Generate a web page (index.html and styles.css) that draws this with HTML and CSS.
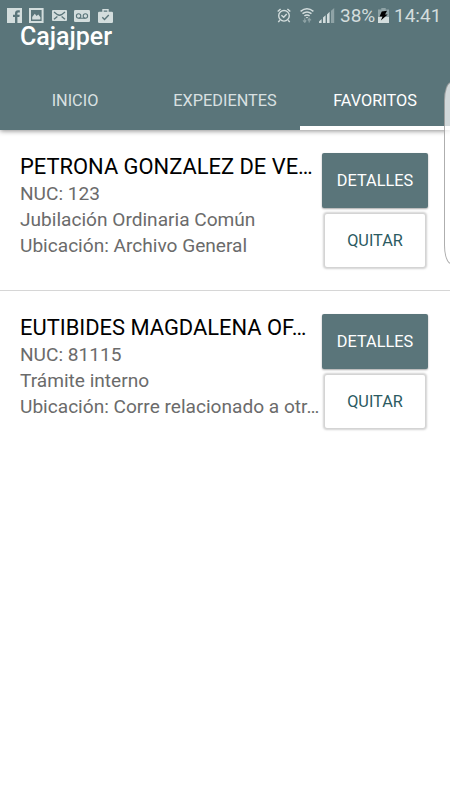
FILE: index.html
```html
<!DOCTYPE html>
<html lang="es">
<head>
    <meta charset="UTF-8">
    <meta name="viewport" content="width=device-width, initial-scale=1.0">
    <title>Cajajper</title>
    <link rel="stylesheet" href="styles.css">
</head>
<body>
    <header class="header">
        <div class="status-bar">
            <div class="status-left">
                <svg width="15" height="15" viewBox="0 0 15 15">
                    <rect width="15" height="15" fill="#d3dddd"/>
                    <path d="M8 15V9H6V6.8h2V5.2C8 3.3 9.2 2.2 11 2.2h1.8v2.3h-1.3c-.8 0-1.1.3-1.1 1v1.3h2.3L12.4 9h-2v6z" fill="#5a757a"/>
                </svg>
                <svg width="15" height="15" viewBox="0 0 15 15">
                    <rect x="1" y="1" width="12.6" height="13" fill="none" stroke="#d3dddd" stroke-width="2"/>
                    <path d="M3.2 11.5V9l2.6-3.2 1.8 2.3 1.7-1.5 2.1 2.6v2.3z" fill="#d3dddd"/>
                </svg>
                <svg width="15" height="11" viewBox="0 0 15 11">
                    <rect width="15" height="11" rx="1" fill="#d3dddd"/>
                    <path d="M2 2l3.5 2.7q2 1.2 4 0L13 2M2 9.2l3.4-2.7M13 9.2L9.6 6.5" fill="none" stroke="#5a757a" stroke-width="1.4"/>
                </svg>
                <svg width="16" height="12" viewBox="0 0 16 12">
                    <rect width="16" height="12" rx="1.3" fill="#d3dddd"/>
                    <path d="M4.6 8.2h6.8" stroke="#5a757a" stroke-width="1.1"/>
                    <circle cx="4.6" cy="6" r="2.2" fill="none" stroke="#5a757a" stroke-width="1.1"/>
                    <circle cx="11.4" cy="6" r="2.2" fill="none" stroke="#5a757a" stroke-width="1.1"/>
                </svg>
                <svg width="15" height="14" viewBox="0 0 15 14">
                    <path d="M5 3V.8h5V3" fill="none" stroke="#d3dddd" stroke-width="1.4"/>
                    <rect y="2.8" width="15" height="11.2" rx="1.2" fill="#d3dddd"/>
                    <path d="M4.3 8.3l2.2 2.2 4.3-4.6" fill="none" stroke="#5a757a" stroke-width="1.4"/>
                </svg>
            </div>
            <div class="status-right">
                <svg class="alarm" width="14" height="15" viewBox="0 0 14 15">
                    <g fill="none" stroke="#d3dddd" stroke-width="1.4">
                        <circle cx="7" cy="7.8" r="5.3"/>
                        <path d="M.7 3.6L3.6 1M13.3 3.6L10.4 1M2.8 12.2l-1.5 1.9M11.2 12.2l1.5 1.9M4.4 7.2l2.3 2 3-3.2"/>
                    </g>
                </svg>
                <svg class="wifi" width="14" height="15" viewBox="0 0 14 15">
                    <g fill="none" stroke="#d3dddd" stroke-width="1.5">
                        <path d="M.6 3.3q6.4-5 12.8 0M2.5 5.7q4.5-3.5 9 0M4.4 8q2.6-2 5.2 0"/>
                    </g>
                    <path d="M5.6 9h2.8L7 10.6z" fill="#d3dddd"/>
                    <path d="M4.8 10.3v4M3 12.4l1.8 1.9 1.4-1.9M9.2 14.6v-4M7.8 12.4l1.4-1.9 1.8 1.9" fill="none" stroke="#8fa3a6" stroke-width="1.2"/>
                </svg>
                <svg class="signal" width="16" height="15" viewBox="0 0 16 15">
                    <path d="M0 15v-1.6L2.6 11v4zM4 15V9.6l2.6-2.3V15zM8 15V6.4l2.6-2.6V15z" fill="#d3dddd"/>
                    <path d="M12 15V2.8L15.2 0v15z" fill="#8fa3a6"/>
                </svg>
                <span class="percent">38%</span>
                <svg class="battery" width="11" height="15" viewBox="0 0 10 15" preserveAspectRatio="none">
                    <path d="M0 1.5h3V0h4v1.5h3V9H0z" fill="#8fa3a6"/>
                    <path d="M0 9h10v6H0z" fill="#d3dddd"/>
                    <path d="M3.4 3.6L8.2 2.8 6.4 6.4H8.8L2.6 12.6l1.5-4.2H1.4z" fill="#000"/>
                </svg>
                <span class="clock">14:41</span>
            </div>
        </div>
        <h1>Cajajper</h1>
        <nav class="tabs">
            <a class="tab">INICIO</a>
            <a class="tab">EXPEDIENTES</a>
            <a class="tab active">FAVORITOS</a>
        </nav>
    </header>

    <main>
        <div class="item">
            <div class="info">
                <h2>PETRONA GONZALEZ DE VE…</h2>
                <p>NUC: 123</p>
                <p>Jubilación Ordinaria Común</p>
                <p>Ubicación: Archivo General</p>
            </div>
            <div class="actions">
                <button class="btn-details">DETALLES</button>
                <button class="btn-remove">QUITAR</button>
            </div>
        </div>
        <div class="item">
            <div class="info">
                <h2>EUTIBIDES MAGDALENA OF…</h2>
                <p>NUC: 81115</p>
                <p>Trámite interno</p>
                <p>Ubicación: Corre relacionado a otr…</p>
            </div>
            <div class="actions">
                <button class="btn-details">DETALLES</button>
                <button class="btn-remove">QUITAR</button>
            </div>
        </div>
    </main>

    <div class="edge-handle"></div>
</body>
</html>
```
FILE: styles.css
```css
body {
    margin: 0;
    height: 800px;
    overflow: hidden;
    position: relative;
    font-family: Roboto, sans-serif;
    background-color: #fff;
}
.header {
    height: 130px;
    display: flex;
    flex-direction: column;
    background-color: #5a757a;
    box-shadow: 0 1px 5px rgba(0,0,0,0.45);
}
.status-bar {
    height: 23px;
    padding: 0 10px 0 7px;
    display: flex;
    justify-content: space-between;
    color: #d3dddd;
}
.status-left, .status-right {
    display: flex;
    align-items: center;
    padding-top: 8px;
}
.status-left {
    gap: 7.4px;
}
.alarm {
    margin-right: 9px;
}
.wifi {
    margin-right: 5px;
}
.signal {
    margin-right: 5px;
}
.percent, .clock {
    font-size: 19px;
    line-height: 16px;
    padding-top: 1px;
}
.percent {
    width: 34px;
    margin-right: 4px;
}
.clock {
    width: 46px;
    margin-left: 5px;
}
h1 {
    margin: 0;
    padding-left: 20px;
    font-size: 25px;
    font-weight: 500;
    line-height: 27px;
    color: #fff;
}
.tabs {
    display: flex;
    margin-top: auto;
}
.tab {
    flex: 1;
    height: 50px;
    line-height: 41px;
    box-sizing: border-box;
    border-bottom: 4px solid transparent;
    text-align: center;
    font-size: 16.3px;
    color: #d9e0e1;
}
.tab.active {
    color: #fff;
    border-bottom-color: #fff;
}
.item {
    display: flex;
    height: 161px;
    box-sizing: border-box;
    padding: 23px 22px 0 20px;
    border-bottom: 1px solid #d6d6d6;
}
.item:last-child {
    border-bottom: none;
}
.info {
    width: 302px;
    white-space: nowrap;
}
h2 {
    margin: 0;
    font-size: 21.9px;
    font-weight: 400;
    line-height: 28px;
    color: #000;
}
p {
    margin: 0;
    font-size: 19.1px;
    line-height: 25.8px;
    color: #6b6b6b;
}
.actions {
    display: flex;
    flex-direction: column;
    gap: 6px;
}
button {
    width: 106px;
    height: 55px;
    padding: 0;
    border: none;
    border-radius: 2px;
    font-family: inherit;
    font-size: 16.3px;
}
.btn-details {
    background-color: #5a757a;
    color: #fff;
    box-shadow: 0 1px 2px rgba(0,0,0,0.35);
}
.btn-remove {
    width: 100px;
    height: 53px;
    margin-left: 3px;
    background-color: #fff;
    color: #2c5b62;
    box-shadow: 0 0 2px 2px rgba(0,0,0,0.18);
}

/* Edge panel handle, drawn over the page on the right side */
.edge-handle {
    position: absolute;
    top: 82px;
    right: -8px;
    width: 12px;
    height: 180px;
    border: 1px solid rgba(120,120,120,0.6);
    border-radius: 12px / 32px;
    background-color: rgba(255,255,255,0.72);
}
```
